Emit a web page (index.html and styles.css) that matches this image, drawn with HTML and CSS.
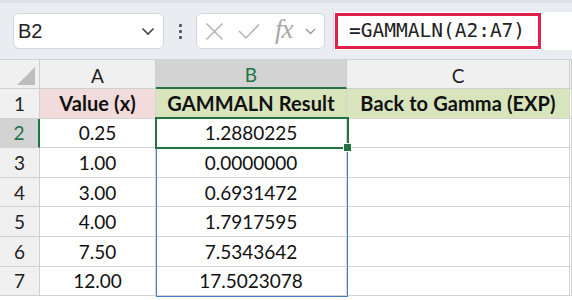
FILE: index.html
```html
<!DOCTYPE html>
<html>
    <head>
        <link rel="stylesheet" href="styles.css">
    </head>
    <body>
        <div class="toolbar">
            <div class="namebox">
                <span class="ref">B2</span>
                <svg class="chev" width="14" height="9" viewBox="0 0 14 9"><path d="M1.5 1.5 L7 7 L12.5 1.5" fill="none" stroke="#444" stroke-width="1.6"/></svg>
            </div>
            <div class="dots"><i></i><i></i><i></i></div>
            <div class="fxbox">
                <svg width="19" height="19" viewBox="0 0 19 19"><path d="M1.5 1.5 L17.5 17.5 M17.5 1.5 L1.5 17.5" stroke="#b3b3b3" stroke-width="1.5"/></svg>
                <svg class="ok" width="22" height="17" viewBox="0 0 22 17"><path d="M1 8 L8 15 L21 1.5" fill="none" stroke="#b3b3b3" stroke-width="1.5"/></svg>
                <span class="fx">fx</span>
                <svg class="chev" width="11" height="7" viewBox="0 0 11 7"><path d="M1 1 L5.5 5.5 L10 1" fill="none" stroke="#999" stroke-width="1.3"/></svg>
            </div>
            <div class="formula">
                <div class="formula-text">=GAMMALN(A2:A7)</div>
            </div>
        </div>

        <div class="sheet">
            <div class="corner"><span class="tri"></span></div>
            <div class="colhead">A</div>
            <div class="colhead sel">B</div>
            <div class="colhead">C</div>
            <div class="colhead"></div>

            <div class="rowhead">1</div>
            <div class="cell hdr pink">Value (x)</div>
            <div class="cell hdr green">GAMMALN Result</div>
            <div class="cell hdr green">Back to Gamma (EXP)</div>
            <div class="cell"></div>

            <div class="rowhead sel">2</div>
            <div class="cell">0.25</div>
            <div class="cell">1.2880225</div>
            <div class="cell"></div>
            <div class="cell"></div>

            <div class="rowhead">3</div>
            <div class="cell">1.00</div>
            <div class="cell">0.0000000</div>
            <div class="cell"></div>
            <div class="cell"></div>

            <div class="rowhead">4</div>
            <div class="cell">3.00</div>
            <div class="cell">0.6931472</div>
            <div class="cell"></div>
            <div class="cell"></div>

            <div class="rowhead">5</div>
            <div class="cell">4.00</div>
            <div class="cell">1.7917595</div>
            <div class="cell"></div>
            <div class="cell"></div>

            <div class="rowhead">6</div>
            <div class="cell">7.50</div>
            <div class="cell">7.5343642</div>
            <div class="cell"></div>
            <div class="cell"></div>

            <div class="rowhead">7</div>
            <div class="cell">12.00</div>
            <div class="cell">17.5023078</div>
            <div class="cell"></div>
            <div class="cell"></div>

            <div class="range"></div>
            <div class="active"><span class="handle"></span></div>
        </div>
    </body>
</html>
```

FILE: styles.css
```css
body {
    margin: 0;
    width: 572px;
    height: 300px;
    overflow: hidden;
    background-color: #fff;
    font-family: "Lato", "Open Sans", sans-serif;
}

.toolbar {
    height: 60px;
    box-sizing: border-box;
    background-color: #e9edf1;
    border-top: 3px solid #dde1e5;
    border-bottom: 1px solid #d0d4d8;
    display: flex;
    align-items: center;
    padding-left: 13px;
}

.namebox {
    width: 151px;
    height: 36px;
    box-sizing: border-box;
    background-color: #fff;
    border: 1px solid #d3d7db;
    border-radius: 6px;
    display: flex;
    align-items: center;
    justify-content: space-between;
    padding: 0 8px 0 4px;
    font-family: "Liberation Sans", Arial, sans-serif;
    font-size: 20px;
    color: #222;
}

.dots {
    width: 32px;
    display: flex;
    flex-direction: column;
    align-items: center;
    gap: 3px;
}
.dots i {
    width: 3px;
    height: 3px;
    background-color: #555;
    border-radius: 1px;
}

.fxbox {
    width: 129px;
    height: 36px;
    box-sizing: border-box;
    background-color: #fff;
    border: 1px solid #d3d7db;
    border-radius: 6px;
    display: flex;
    align-items: center;
    padding: 0 0 0 8px;
}
.fxbox .ok {
    margin-left: 14px;
}
.fxbox .fx {
    font-family: "Liberation Serif", serif;
    font-style: italic;
    font-size: 27px;
    color: #a8a8a8;
    margin-left: 15px;
    margin-top: -4px;
    letter-spacing: -1px;
}
.fxbox .chev {
    margin-left: 12px;
}

.formula {
    flex: 1;
    height: 38px;
    margin-left: 8px;
    background-color: #fff;
    border-left: 1px solid #d3d7db;
    display: flex;
    align-items: center;
}
.formula-text {
    width: 206px;
    height: 36px;
    box-sizing: border-box;
    border: 3px solid #e0204a;
    margin-left: 1px;
    padding-left: 11px;
    font-family: "DejaVu Sans Mono", monospace;
    font-size: 19.5px;
    line-height: 30px;
    color: #222;
}

.sheet {
    position: relative;
    display: grid;
    grid-template-columns: 40px 116px 191px 223px 2px;
    grid-template-rows: 29px repeat(7, 29.6px);
    font-family: "Lato", "Open Sans", sans-serif;
    font-size: 19px;
    color: #111;
}

.corner {
    background-color: #f0f0f0;
    border-right: 1px solid #cfcfcf;
    border-bottom: 1px solid #cfcfcf;
    position: relative;
}
.tri {
    position: absolute;
    right: 4px;
    bottom: 3px;
    width: 0;
    height: 0;
    border-left: 18px solid transparent;
    border-bottom: 18px solid #bdbdbd;
}

.colhead {
    background-color: #f0f0f0;
    border-right: 1px solid #cfcfcf;
    border-bottom: 1px solid #cfcfcf;
    display: flex;
    align-items: center;
    justify-content: center;
    font-size: 19px;
    color: #222;
    padding-top: 2px;
    box-sizing: border-box;
}
.colhead.sel {
    background-color: #d3d3d3;
    color: #217346;
    border-bottom: 2px solid #217346;
}

.rowhead {
    background-color: #f0f0f0;
    border-right: 1px solid #cfcfcf;
    border-bottom: 1px solid #cfcfcf;
    display: flex;
    align-items: center;
    justify-content: center;
    font-size: 19px;
    color: #222;
    box-sizing: border-box;
}
.rowhead.sel {
    background-color: #d3d3d3;
    color: #217346;
    border-right: 2px solid #217346;
}

.cell {
    border-right: 1px solid #d4d4d4;
    border-bottom: 1px solid #d4d4d4;
    display: flex;
    align-items: center;
    justify-content: center;
    white-space: nowrap;
    overflow: hidden;
}
.cell.hdr {
    font-weight: bold;
    font-size: 20px;
    letter-spacing: 0.1px;
}
.pink {
    background-color: #f2dcdb;
}
.green {
    background-color: #d8e4bc;
}

.range {
    position: absolute;
    left: 156px;
    top: 58px;
    width: 192px;
    height: 179px;
    box-sizing: border-box;
    border: 1px solid #4a7bc6;
}
.active {
    position: absolute;
    left: 155px;
    top: 57px;
    width: 194px;
    height: 32px;
    box-sizing: border-box;
    border: 2px solid #217346;
}
.handle {
    position: absolute;
    right: -5px;
    bottom: -5px;
    width: 7px;
    height: 7px;
    background-color: #217346;
    border: 1px solid #fff;
}
```
